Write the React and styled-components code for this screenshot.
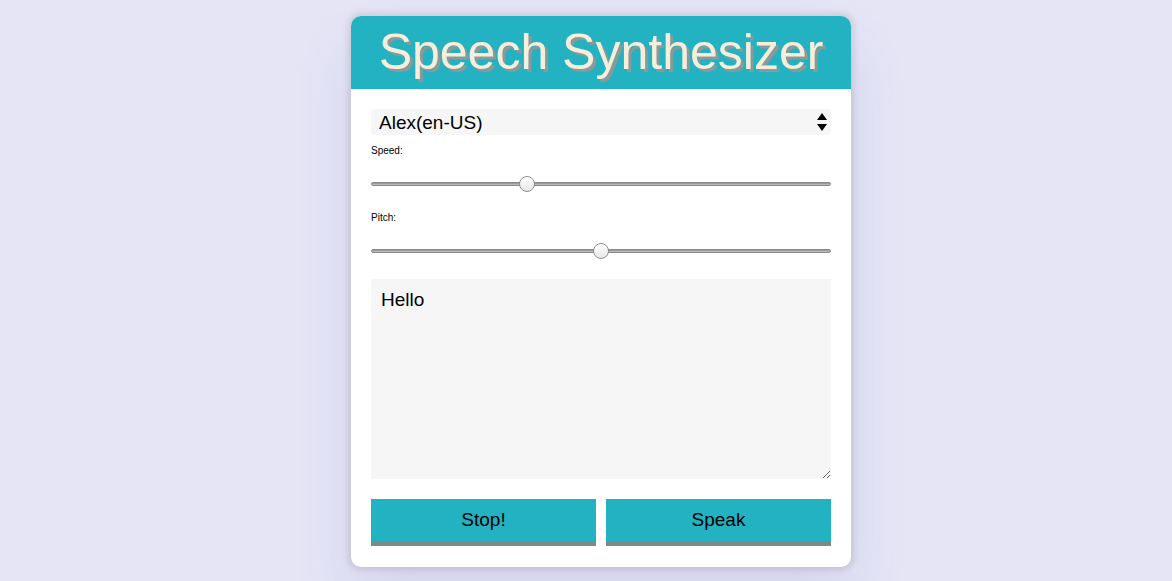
import React, { useState } from 'react';
import styled, { createGlobalStyle } from 'styled-components';

const GlobalStyle = createGlobalStyle`
  html, body {
    margin: 0;
    padding: 0;
    background: #e5e5f6;
    font-family: 'Liberation Sans', Arial, sans-serif;
  }
`;

const Page = styled.div`
  min-height: 581px;
  display: flex;
  justify-content: center;
  align-items: flex-start;
  padding: 16px 0 0 30px;
  box-sizing: border-box;
`;

const Card = styled.div`
  width: 500px;
  background: #fff;
  border-radius: 10px;
  overflow: hidden;
  box-shadow: 0 0 6px 3px rgba(0, 0, 0, 0.1), 0 34px 60px rgba(90, 90, 170, 0.12);
`;

const Header = styled.h1`
  margin: 0;
  height: 73px;
  background: #23b2c1;
  color: #f4eedb;
  font-size: 50px;
  font-weight: 400;
  line-height: 73px;
  text-align: center;
  text-shadow: 3px 3px 0 #8b9a99;
`;

const Body = styled.div`
  padding: 20px 20px 21px;
  display: flex;
  flex-direction: column;
`;

const SelectWrap = styled.div`
  position: relative;
  height: 26px;
`;

const Select = styled.select`
  appearance: none;
  width: 100%;
  height: 26px;
  border: none;
  border-radius: 4px;
  background: #f6f6f6;
  font-family: 'Liberation Sans', Arial, sans-serif;
  font-size: 19px;
  color: #000;
  padding: 0 8px;
  outline: none;
`;

const Arrows = styled.svg`
  position: absolute;
  right: 3px;
  top: 4px;
  pointer-events: none;
`;

const Label = styled.label`
  font-size: 10px;
  line-height: 12px;
  color: #000;
  margin-top: 10px;
`;

const Range = styled.input`
  appearance: none;
  width: 100%;
  height: 16px;
  margin: 19px 0 10px;
  background: transparent;

  &::-webkit-slider-runnable-track {
    height: 4px;
    border-radius: 3px;
    background: linear-gradient(#8c8c8c, #c9c9c9);
    border: 1px solid #8a8a8a;
  }

  &::-webkit-slider-thumb {
    appearance: none;
    width: 16px;
    height: 16px;
    margin-top: -7px;
    border-radius: 50%;
    background: linear-gradient(#ffffff, #e8e8e8);
    border: 1px solid #8f8f8f;
    box-sizing: border-box;
  }
`;

const TextArea = styled.textarea`
  height: 200px;
  margin-top: 10px;
  border: none;
  background: #f6f6f6;
  padding: 10px;
  box-sizing: border-box;
  font-family: 'Liberation Sans', Arial, sans-serif;
  font-size: 19px;
  color: #000;
  outline: none;
`;

const Buttons = styled.div`
  margin-top: 20px;
  display: grid;
  grid-template-columns: 1fr 1fr;
  gap: 10px;
`;

const Button = styled.button`
  height: 47px;
  border: none;
  border-bottom: 5px solid #7b8b89;
  background: #23b2c1;
  font-family: 'Liberation Sans', Arial, sans-serif;
  font-size: 19px;
  color: #000;
  padding: 0;
  cursor: pointer;
`;

export default function App() {
  const [rate, setRate] = useState(1);
  const [pitch, setPitch] = useState(1);
  const [text, setText] = useState('Hello');

  return (
    <Page>
      <GlobalStyle />
      <Card>
        <Header>Speech Synthesizer</Header>
        <Body>
          <SelectWrap>
            <Select defaultValue="Alex">
              <option value="Alex">Alex(en-US)</option>
            </Select>
            <Arrows width="12" height="18" viewBox="0 0 12 18">
              <path d="M6 0 L11 7 H1 Z" fill="#000" />
              <path d="M6 18 L11 11 H1 Z" fill="#000" />
            </Arrows>
          </SelectWrap>
          <Label>Speed:</Label>
          <Range type="range" min="0" max="3" step="0.1" value={rate} onChange={(e) => setRate(e.target.value)} />
          <Label>Pitch:</Label>
          <Range type="range" min="0" max="2" step="0.1" value={pitch} onChange={(e) => setPitch(e.target.value)} />
          <TextArea value={text} onChange={(e) => setText(e.target.value)} />
          <Buttons>
            <Button>Stop!</Button>
            <Button>Speak</Button>
          </Buttons>
        </Body>
      </Card>
    </Page>
  );
}
